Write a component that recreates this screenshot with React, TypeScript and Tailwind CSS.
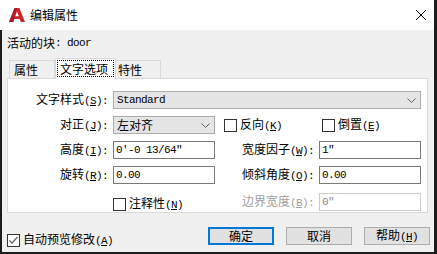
import React from "react";

const CJK = "font-['Noto_Sans_CJK_SC',sans-serif]";
const MONO = "font-['Liberation_Mono',monospace] text-[11px] tracking-[-0.6px]";

// 标签: 中文 + (快捷键):
const Lbl: React.FC<{ zh: string; k: string; colon?: boolean }> = ({ zh, k, colon = true }) => (
  <span className="whitespace-nowrap">
    {zh}
    <span className={MONO}>
      (<span className="underline underline-offset-[1px]">{k}</span>){colon ? ":" : ""}
    </span>
  </span>
);

const Chevron = () => (
  <svg width="9" height="5" viewBox="0 0 9 5" className="shrink-0">
    <polyline points="0.5,0.5 4.5,4.5 8.5,0.5" fill="none" stroke="#606060" strokeWidth="1" />
  </svg>
);

const Check: React.FC<{ checked?: boolean; children: React.ReactNode }> = ({ checked, children }) => (
  <div className="flex items-center gap-[3px]">
    <div className="w-[13px] h-[13px] border border-[#333333] bg-white flex items-center justify-center">
      {checked && (
        <svg width="11" height="11" viewBox="0 0 11 11">
          <polyline points="1.5,5.5 4,8 9.5,2" fill="none" stroke="#6a6a6a" strokeWidth="1.3" />
        </svg>
      )}
    </div>
    <span>{children}</span>
  </div>
);

const Input: React.FC<{ value: string; w: string; disabled?: boolean }> = ({ value, w, disabled }) => (
  <div
    className={`${w} h-[18px] flex items-center pl-[2px] border bg-white ${MONO} ${
      disabled ? "border-[#cccccc] text-[#8a8a8a]" : "border-[#7a7a7a] text-black"
    }`}
  >
    {value}
  </div>
);

const Row: React.FC<{ children: React.ReactNode; className?: string }> = ({ children, className = "" }) => (
  <div className={`flex items-center h-[18px] ${className}`}>{children}</div>
);

const Button: React.FC<{ children: React.ReactNode; primary?: boolean }> = ({ children, primary }) => (
  <div
    className={`w-[66px] h-[18px] flex items-center justify-center bg-[#e1e1e1] ${
      primary ? "border-2 border-[#0078d7]" : "border border-[#adadad]"
    }`}
  >
    {children}
  </div>
);

export default function App() {
  return (
    <div
      className={`w-[437px] h-[254px] bg-[#f0f0f0] flex flex-col border-r-[3px] border-b-[2px] border-[#1c1c1c] overflow-hidden text-[12px] leading-[14px] text-black ${CJK}`}
    >
      {/* 标题栏 */}
      <div className="h-[30px] shrink-0 bg-white flex items-center pl-[9px]">
        <svg width="16" height="14" viewBox="0 0 16 14" className="shrink-0">
          <path d="M5.6 0h4.8L16 14h-4.2l-1.1-3H5.3L4.2 14H0z" fill="#c9252f" />
          <path d="M5.6 0h2.4L4.2 14H0z" fill="#a81c25" />
          <path d="M6.3 8.2h3.5L8 3.4z" fill="#ffffff" />
        </svg>
        <span className="ml-[5px]">编辑属性</span>
        <svg width="10" height="10" viewBox="0 0 10 10" className="ml-auto mr-[8px]">
          <path d="M0 0L10 10M10 0L0 10" stroke="#000" strokeWidth="1" />
        </svg>
      </div>

      {/* 内容 */}
      <div className="flex-1 flex flex-col border-l-[2px] border-[#1c1c1c] pl-[5px] pr-[4px]">
        <div className="mt-[6px] h-[14px] flex items-center">
          活动的块<span className={MONO}>: door</span>
        </div>

        {/* 选项卡 */}
        <div className="mt-[8px] h-[20px] flex items-end pl-[2px]">
          <div className="w-[46px] h-[18px] border border-b-0 border-[#d9d9d9] flex items-center pl-[4px]">属性</div>
          <div className="relative z-10 w-[61px] h-[21px] -mb-[1px] bg-white border border-b-0 border-[#d9d9d9] px-[1px] pt-[1px]">
            <div className="h-[17px] border border-dotted border-black flex items-center pl-[2px]">文字选项</div>
          </div>
          <div className="w-[45px] h-[18px] border border-b-0 border-l-0 border-[#d9d9d9] flex items-center pl-[2px]">特性</div>
        </div>

        <div className="w-[421px] h-[135px] border border-[#d9d9d9] bg-white flex flex-col gap-[7px] pt-[12px]">
          <Row>
            <div className="w-[100px] text-right"><Lbl zh="文字样式" k="S" /></div>
            <div className="ml-[5px] w-[308px] h-[18px] bg-[#e5e5e5] border border-[#adadad] flex items-center justify-between pl-[3px] pr-[4px]">
              <span className={MONO}>Standard</span>
              <Chevron />
            </div>
          </Row>
          <Row>
            <div className="w-[100px] text-right"><Lbl zh="对正" k="J" /></div>
            <div className="ml-[5px] w-[102px] h-[18px] bg-[#e5e5e5] border border-[#adadad] flex items-center justify-between pl-[3px] pr-[4px]">
              <span>左对齐</span>
              <Chevron />
            </div>
            <div className="w-[107px] pl-[9px]">
              <Check><Lbl zh="反向" k="K" colon={false} /></Check>
            </div>
            <Check><Lbl zh="倒置" k="E" colon={false} /></Check>
          </Row>
          <Row>
            <div className="w-[100px] text-right"><Lbl zh="高度" k="I" /></div>
            <div className="ml-[5px]"><Input w="w-[102px]" value={`0'-0 13/64"`} /></div>
            <div className="w-[99px] text-right"><Lbl zh="宽度因子" k="W" /></div>
            <div className="ml-[5px]"><Input w="w-[102px]" value={`1"`} /></div>
          </Row>
          <Row>
            <div className="w-[100px] text-right"><Lbl zh="旋转" k="R" /></div>
            <div className="ml-[5px]"><Input w="w-[102px]" value="0.00" /></div>
            <div className="w-[99px] text-right"><Lbl zh="倾斜角度" k="O" /></div>
            <div className="ml-[5px]"><Input w="w-[102px]" value="0.00" /></div>
          </Row>
          <Row className="mt-[2px]">
            <div className="w-[100px]" />
            <div className="ml-[5px] w-[102px] mt-[4px]">
              <Check><Lbl zh="注释性" k="N" colon={false} /></Check>
            </div>
            <div className="w-[99px] text-right text-[#a0a0a0]"><Lbl zh="边界宽度" k="B" /></div>
            <div className="ml-[5px]"><Input w="w-[102px]" value={`0"`} disabled /></div>
          </Row>
        </div>

        {/* 底部 */}
        <div className="mt-[14px] flex items-start">
          <div className="mt-[5px]">
            <Check checked><Lbl zh="自动预览修改" k="A" colon={false} /></Check>
          </div>
          <div className="ml-auto flex gap-[12px]">
            <Button primary>确定</Button>
            <Button>取消</Button>
            <Button><Lbl zh="帮助" k="H" colon={false} /></Button>
          </div>
        </div>
      </div>
    </div>
  );
}
